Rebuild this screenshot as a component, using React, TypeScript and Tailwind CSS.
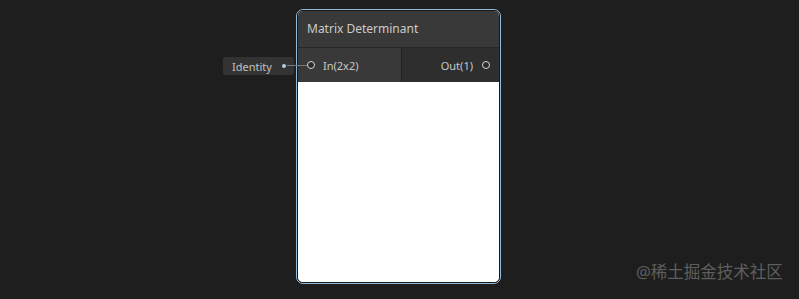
import React from "react";

const font = { fontFamily: '"Noto Sans", "Open Sans", sans-serif' };

export default function App() {
  return (
    <div className="relative w-[799px] h-[299px] bg-[#1e1e1e] overflow-hidden" style={font}>
      {/* Identity input pill */}
      <div className="absolute left-[223px] top-[57px] w-[71px] h-[18px] bg-[#333333] rounded-[2px] flex items-center pl-[9px]">
        <span className="text-[11px] leading-none text-[#c2c2c2]">Identity</span>
        <span className="absolute left-[59px] top-[7px] w-[4px] h-[4px] rounded-full bg-[#b6cde6]" />
      </div>
      {/* connector line */}
      <div className="absolute left-[287px] top-[65px] w-[20px] h-[1px] bg-[#7a7a7a] z-10" />

      {/* Node */}
      <div className="absolute left-[296px] top-[9px] w-[205px] h-[275px] rounded-[7px] border border-[#93bbdd]">
        <div className="w-full h-full rounded-[6px] border border-[#171717] overflow-hidden flex flex-col bg-white">
          <div className="h-[36px] bg-[#393939] flex items-center pl-[9px]">
            <span className="text-[12px] text-[#cbcbcb] leading-none">Matrix Determinant</span>
          </div>
          <div className="h-[1px] bg-[#262626]" />
          <div className="h-[34px] flex">
            <div className="w-[103px] bg-[#393939] flex items-center pl-[9px] relative">
              <span className="w-[8px] h-[8px] rounded-full border-[1.5px] border-[#d8d8d8] bg-[#2a2a2a]" />
              <span className="ml-[8px] text-[11px] text-[#c8c8c8] leading-none">In(2x2)</span>
            </div>
            <div className="w-[1px] bg-[#232323]" />
            <div className="flex-1 bg-[#2e2e2e] flex items-center justify-end pr-[9px]">
              <span className="text-[11px] text-[#c8c8c8] leading-none">Out(1)</span>
              <span className="ml-[9px] w-[8px] h-[8px] rounded-full border-[1.5px] border-[#d8d8d8] bg-[#2a2a2a]" />
            </div>
          </div>
          <div className="flex-1 bg-white" />
        </div>
      </div>

      {/* watermark */}
      <div
        className="absolute left-[636px] top-[261px] text-[16.5px] leading-[22px] text-[#5e5e5e]"
        style={{ fontFamily: '"Noto Sans", "Noto Sans CJK SC", sans-serif' }}
      >
        @稀土掘金技术社区
      </div>
    </div>
  );
}
